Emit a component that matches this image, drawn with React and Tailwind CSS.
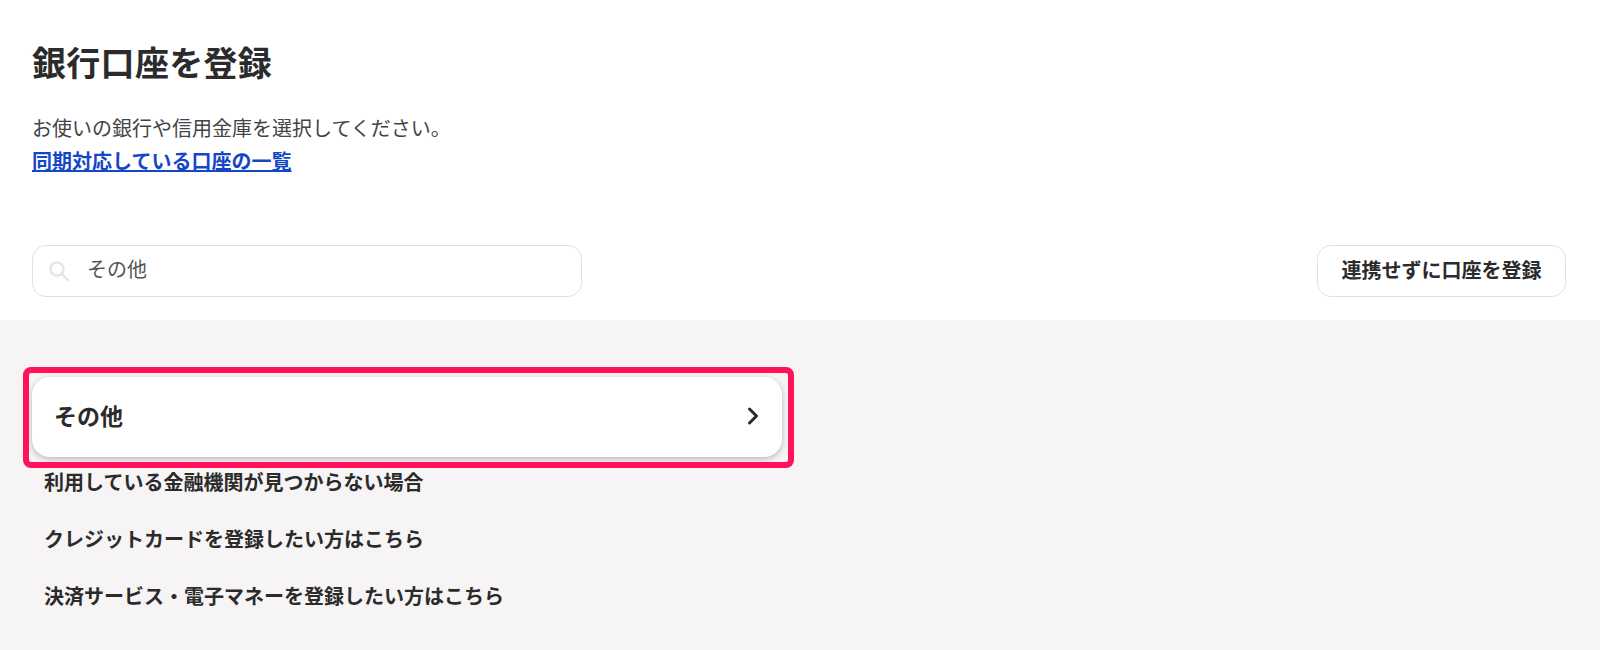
import { ChevronRight } from 'lucide-react';

function SearchIcon() {
  return (
    <svg width="20" height="20" viewBox="0 0 20 20" fill="none" stroke="#e4e4e4" strokeWidth="2.4">
      <circle cx="8" cy="8" r="6.6" />
      <path d="M13 13l6 6" strokeLinecap="round" />
    </svg>
  );
}

export default function App() {
  const links = [
    '利用している金融機関が見つからない場合',
    'クレジットカードを登録したい方はこちら',
    '決済サービス・電子マネーを登録したい方はこちら',
  ];

  return (
    <div className="h-[650px] overflow-hidden bg-white text-[#2b2b2b] font-['Noto_Sans_CJK_JP','Noto_Sans',sans-serif]">
      <div className="h-[320px] px-8 pt-[40px]">
        <h1 className="text-[34px] leading-[44px] font-bold tracking-[0.3px]">銀行口座を登録</h1>
        <p className="mt-[28px] text-[20px] leading-[32px] text-[#444]">お使いの銀行や信用金庫を選択してください。</p>
        <a href="#" className="mt-px block w-fit text-[20px] leading-[32px] font-bold text-[#1446c8] underline">同期対応している口座の一覧</a>
        <div className="mt-[68px] flex items-center justify-between pr-[2px]">
          <div className="flex h-[52px] w-[550px] items-center gap-[18px] rounded-[14px] border border-[#e0e0e0] bg-white pl-4">
            <SearchIcon />
            <span className="pb-[4px] text-[20px] text-[#555]">その他</span>
          </div>
          <button className="flex h-[52px] w-[249px] items-center justify-center rounded-[14px] border border-[#e0e0e0] bg-white pb-[2px] text-[20px] font-bold">連携せずに口座を登録</button>
        </div>
      </div>
      <div className="h-[330px] bg-[#f6f4f5] px-8 pt-[57px]">
        <div className="relative flex h-[80px] w-[750px] items-center justify-between rounded-[18px] bg-white pl-[22px] pr-[15px] pb-[3px] shadow-[0_2px_6px_rgba(0,0,0,0.25)]">
          <span className="text-[23px] font-bold">その他</span>
          <ChevronRight size={28} strokeWidth={2.6} />
          <div className="absolute -top-[10px] -left-[9px] -right-[12px] -bottom-[11px] rounded-[8px] border-[6px] border-[#ff1259]" />
        </div>
        <div className="mt-[9px] flex flex-col pl-3">
          {links.map((t) => (
            <a key={t} href="#" className="h-[57px] text-[20px] leading-[32px] font-bold">{t}</a>
          ))}
        </div>
      </div>
    </div>
  );
}
